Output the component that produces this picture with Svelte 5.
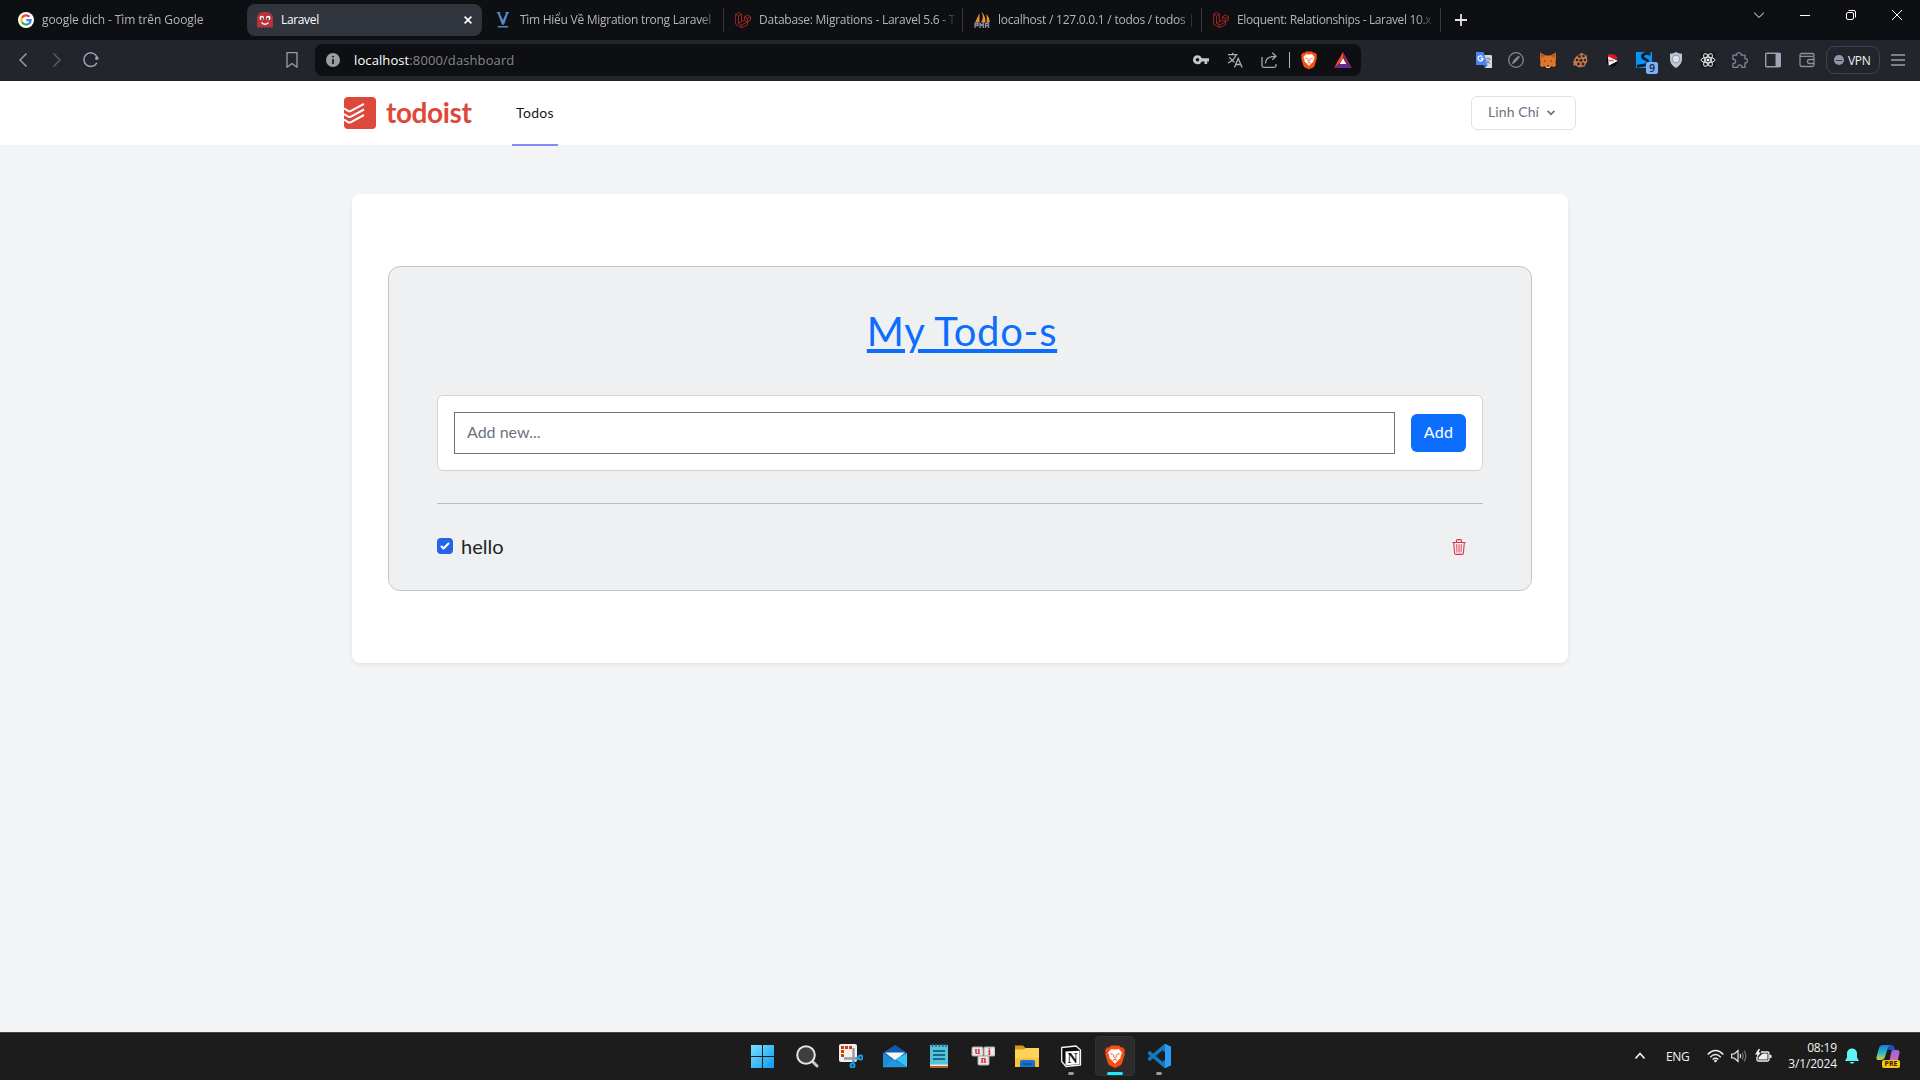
<script>
  const tabs = [
    { icon: 'google', title: 'google dich - Tìm trên Google', ls: '-0.08px' },
    { icon: 'ghost', title: 'Laravel', active: true, ls: '-0.35px' },
    { icon: 'viblo', title: 'Tìm Hiểu Về Migration trong Laravel', sep: true, ls: '-0.27px' },
    { icon: 'laravel', title: 'Database: Migrations - Laravel 5.6 - T', sep: true, ls: '-0.25px' },
    { icon: 'pma', title: 'localhost / 127.0.0.1 / todos / todos |', sep: true, ls: '-0.24px' },
    { icon: 'laravel', title: 'Eloquent: Relationships - Laravel 10.x', sep: true, ls: '-0.36px' }
  ];
  const extensions = ['gtranslate', 'nocompass', 'fox', 'cookie', 'play', 'surf', 'shield', 'react', 'puzzle'];
  const apps = [
    { name: 'windows' }, { name: 'search' }, { name: 'snip' }, { name: 'mail' }, { name: 'notepad' },
    { name: 'unikey' }, { name: 'folder' }, { name: 'notion', open: true },
    { name: 'brave', open: true, focus: true }, { name: 'vscode', open: true }
  ];
  let todos = $state([{ title: 'hello', done: true }]);
</script>

{#snippet braveMark(size)}
  <svg width={size} height={size * 1.15} viewBox="0 0 20 23">
    <path fill="#fb4d12" d="M6 .5h8l2 2.1 1.8-.3L20 5.2l-.7 2 .5 1.8-2.6 8.8c-.4 1.3-1 2-2 2.7L10 23l-5.200-2.500c-1-.7-1.600-1.400-2-2.700L.2 9l.5-1.800L0 5.200l2.200-2.900 1.800.3z" />
    <path fill="#fff" d="M6.200 4 10 4.500l3.800-.5L17 7.500l-1.200 3.300-.3 2.200-2.500 2.600-3 3.200-3-3.200L4.500 13l-.3-2.200L3 7.500z" />
    <path fill="none" stroke="#fb4d12" stroke-width=".9" d="M5.300 8.600 8 9.300M14.700 8.600 12 9.300M8.700 9.500v2.800L10 13l1.300-.7V9.500M8 15.300l2-1 2 1" />
  </svg>
{/snippet}

{#snippet favicon(name)}
  {#if name === 'google'}
    <svg width="16" height="16" viewBox="0 0 16 16"><circle cx="8" cy="8" r="8" fill="#fff" />
      <g fill="none" stroke-width="2.200">
        <path stroke="#ea4335" d="M4 5.700A4.700 4.700 0 0 1 11.400 4.700" />
        <path stroke="#fbbc05" d="M4 5.600a4.700 4.700 0 0 0 0 4.800" />
        <path stroke="#34a853" d="M4 10.300a4.700 4.700 0 0 0 7 1.200" />
        <path stroke="#4285f4" d="M8.200 8.100h4.500A4.700 4.700 0 0 1 10.900 11.600" />
      </g></svg>
  {:else if name === 'ghost'}
    <svg width="16" height="16" viewBox="0 0 16 16"><path fill="#b5333a" d="M0 6a6 6 0 0 1 6-6h4a6 6 0 0 1 6 6v9l-1.500 1-1.700-1-1.600 1-1.600-1L8 16l-1.600-1-1.600 1-1.600-1-1.700 1L0 15z" />
      <circle cx="4.800" cy="6" r="2.300" fill="#fff" /><circle cx="11.200" cy="6" r="2.300" fill="#fff" /><circle cx="5.200" cy="6.800" r="1.200" fill="#8e2730" /><circle cx="10.800" cy="6.800" r="1.200" fill="#8e2730" />
      <path fill="none" stroke="#fff" stroke-width="1.200" d="M4.500 10.500q3.500 3.500 7 0" /></svg>
  {:else if name === 'viblo'}
    <svg width="16" height="16" viewBox="0 0 16 16"><path fill="#5488c7" d="M.8 0h3.400v1.300h-.5L7 8l3-6.700h-.5V0H13v1.300h-.8L8 12.700H6L1.700 1.300H.8zM1.700 13.900h10.500v1.600H1.700z" /></svg>
  {:else if name === 'laravel'}
    <svg width="16" height="16" viewBox="0 0 16 16" fill="none" stroke="#9c2422" stroke-width="1"><path d="M.6 2.200 3.500.6l3 1.600v7.600l3-1.700V4.800l3-1.800 3 1.800v3.300l-3 1.700v3.200l-6 2.500-5.900-3.200zM.6 2.200l2.900 1.700 3-1.700M3.500 3.900v7.500l3 1.700 6-3.300M9.500 4.800l3 1.700 3-1.700M12.500 6.500v3.300M9.500 8.100l3 1.700M6.500 9.800l-3 1.600M6.500 13.100v2.400" /></svg>
  {:else if name === 'pma'}
    <svg width="16" height="16" viewBox="0 0 16 16"><path fill="#e8922a" d="M5.500 1 1 10.500h4.500zM7.500 0C9 3 9.500 7 7 10.500h4.300C12 7 10.500 2.500 7.500 0zM12 2c1 3 1.300 6 .3 8.500h3.400C16 7.500 14.500 4 12 2z" /><path fill="none" stroke="#8d8cae" stroke-width="1.300" d="M1 16v-4.500h3v2H1.500M6 16v-4.500l1.700 2 1.600-2V16M11.500 16v-4.500h3V16M11.500 13.700h3" /></svg>
  {/if}
{/snippet}

{#snippet extension(name)}
  {#if name === 'gtranslate'}
    <svg width="16" height="16" viewBox="0 0 16 16"><path fill="#d5dadf" d="M6 3h9.300l.7.700V16H9z" /><path stroke="#6f8c99" fill="none" d="M9.500 6.700h5M12 5.500v1.200M10.200 11.500c2-1 3.200-2.600 3.500-4.600M10.700 8c.5 1.500 1.700 2.800 3.400 3.700" /><path fill="#4a86f3" d="M0 0h7.500L11.500 13H0z" /><path fill="#2f61c4" d="m7.500 13h4L9 16z" /><path fill="none" stroke="#fff" stroke-width="1.300" d="M6.400 4.700A2.500 2.500 0 1 0 7 6.500H4.700" /></svg>
  {:else if name === 'nocompass'}
    <svg width="16" height="16" viewBox="0 0 16 16" fill="none" stroke="#85878d"><circle cx="8" cy="8" r="7.300" stroke-width="1.300" /><path d="m4.500 11.500 1.200-3L10.500 4l1 1L7 10.300z" fill="#85878d" /></svg>
  {:else if name === 'fox'}
    <svg width="16" height="16" viewBox="0 0 16 16"><path fill="#e27625" d="m0 .5 6 3h4l6-3V6l-.5 5 .5 2-1.500 2-3.500-.8L9.500 16h-3L5 14.200 1.500 15 0 13l.5-2L0 6z" /><path fill="#a35a2a" d="m0 .5 5.200 3.300L1.500 6zM16 .5l-5.200 3.300L14.500 6z" /><path fill="#292b30" d="m4 8.200 2 .7-1.500.8zM12 8.200l-2 .7 1.500.8zM7 13.300h2v1.200H7z" /><path fill="#e9d8c9" d="m6 14.500 2 .5 2-.5-.7 1.500H6.700z" /></svg>
  {:else if name === 'cookie'}
    <svg width="16" height="16" viewBox="0 0 16 16"><path fill="#bf7950" d="m9.500.7 5.100 2.800L15.500 9l-3 5.600-5.500.9-3.700-2.200-2.300.5 1-2.300-1.500-1 1.700-1.500L2 7.500l2-2.800z" /><g fill="#3a211b"><circle cx="7.500" cy="4.500" r="1.400" /><circle cx="11.500" cy="4" r="1.300" /><circle cx="5" cy="8" r="1.300" /><circle cx="9" cy="8.300" r="1.500" /><circle cx="13" cy="8" r="1.200" /><circle cx="6.500" cy="12" r="1.400" /><circle cx="11" cy="12" r="1.400" /></g></svg>
  {:else if name === 'play'}
    <svg width="16" height="16" viewBox="0 0 16 16"><circle cx="8" cy="9" r="5.800" fill="#0b0c10" /><path fill="#e4151f" d="M4 2.200h4.500A5 5 0 0 1 13.500 7.500L4 5.500z" /><path fill="#f4f4f5" d="m4 4.500 10 4.200-9.300 5z" /><path fill="#d0606a" d="M5 7.800h4.500v1.500H5z" /></svg>
  {:else if name === 'surf'}
    <span class="badged"><svg width="16" height="16" viewBox="0 0 16 16"><path fill="#0a94f5" d="M0 0h16v16H0z" /><path fill="none" stroke="#122034" stroke-width="3" d="M14.500 2C9.500.5 6.500 2.200 6.500 4.500 6.500 7.500 12 7 12 10c0 3.800-6 3-11 4.500" /></svg><b class="badge">9</b></span>
  {:else if name === 'shield'}
    <svg width="16" height="16" viewBox="0 0 16 16"><path fill="#bfc6d4" d="M8 0q2.500 1.700 6 1.800V7c0 4-2.500 7-6 9-3.500-2-6-5-6-9V1.800Q5.500 1.700 8 0" /><circle cx="8" cy="7" r="3.700" fill="#dce0e8" stroke="#8f9bb1" stroke-width="1.100" /></svg>
  {:else if name === 'react'}
    <svg width="16" height="16" viewBox="0 0 16 16" fill="none" stroke="#e8e8e8"><path fill="#1b1c20" stroke="none" d="M0 0h16v16H0z" /><ellipse cx="8" cy="8" rx="7" ry="2.700" /><ellipse cx="8" cy="8" rx="7" ry="2.700" transform="rotate(60 8 8)" /><ellipse cx="8" cy="8" rx="7" ry="2.700" transform="rotate(120 8 8)" /><circle cx="8" cy="8" r="1.300" fill="#fff" stroke="none" /></svg>
  {:else}
    <svg width="16" height="16" viewBox="0 0 16 16" fill="none" stroke="#82869a" stroke-width="1.300"><path d="M1 3.200h3.800C4.300 1.800 5.500.7 7 .7s2.700 1.100 2.200 2.500H13v3.600c1.400-.5 2.400.6 2.400 2s-1 2.400-2.400 2v4.500H9.800c.3-1.400-.8-2.400-2-2.400s-2.300 1-2 2.400H1v-4c1.600.4 2.700-.7 2.700-2S2.600 7 1 7.400z" stroke-linejoin="round" /></svg>
  {/if}
{/snippet}

{#snippet app(name)}
  {#if name === 'windows'}
    <svg width="24" height="24" viewBox="0 0 24 24"><defs><linearGradient id="win" gradientUnits="userSpaceOnUse" x1="0" y1="0" x2="24" y2="24"><stop offset="0" stop-color="#7fe0ff" /><stop offset="1" stop-color="#0a98f4" /></linearGradient></defs><path fill="url(#win)" d="M0 1h11v11H0zM12 1h11v11H12zM0 13h11v11H0zM12 13h11v11H12z" /></svg>
  {:else if name === 'search'}
    <svg width="24" height="24" viewBox="0 0 24 24" fill="none"><path stroke="#c9c9c9" stroke-width="3" stroke-linecap="round" d="m17 17 5 5" /><circle cx="11" cy="11" r="8.800" fill="#3c3f42" stroke="#e3e3e3" stroke-width="2" /></svg>
  {:else if name === 'snip'}
    <svg width="24" height="24" viewBox="0 0 24 24" fill="none"><rect x="0" y="0" width="18" height="18" rx="2" fill="#f0f0f0" /><path stroke="#d83b01" stroke-width="3" stroke-dasharray="3 1" d="M3.500 13V2M6 3.500h7" /><path stroke="#9a9fa5" stroke-width="2.500" d="M14.500 4v14M5 14.500h14" /><g stroke="#1b9de2" stroke-width="2"><circle cx="21.500" cy="13.500" r="2" /><circle cx="13.500" cy="21.500" r="2" /><path d="M16.500 14.500l3-.5M14.500 16.500l-.5 3" /></g></svg>
  {:else if name === 'mail'}
    <svg width="24" height="24" viewBox="0 0 24 24"><path fill="#0f5cae" d="M0 9 12 1l12 8v4H0z" /><path fill="#f5f7f9" d="M2 8.500h20l-10 8z" /><path fill="#1b8edb" d="M0 9l12 7.500L24 23H0z" /><path fill="#35c3f3" d="M24 9v14.200L12 15.500z" /><path fill="#1f9ae2" d="M0 23.200 11 15.500 24 23.200z" /></svg>
  {:else if name === 'notepad'}
    <svg width="24" height="24" viewBox="0 0 24 24"><path fill="#b5601d" d="M3 20h18v4H3z" /><path fill="#e7e9ea" d="M3 20h18v2H3z" /><path fill="#56c3da" d="M3 1h18v19.500H3z" /><path stroke="#176b85" stroke-width="2" fill="none" d="M6 7h12M6 11h12M6 15h12" /><path stroke="#176b85" stroke-width="1.500" d="M5.500 0v3M9 0v3M12.500 0v3M16 0v3M19 0v3" /></svg>
  {:else if name === 'unikey'}
    <svg width="24" height="24" viewBox="0 0 24 24"><g fill="#e8e8e8" stroke="#aaa"><rect x="1" y="3" width="11" height="9" rx="1" /><rect x="13" y="3" width="11" height="9" rx="1" /><rect x="7" y="12" width="11" height="9" rx="1" /></g><g fill="#e0242c" font-family="Liberation Serif, serif" font-weight="bold" font-size="10" text-anchor="middle"><text x="6.500" y="10">u</text><text x="18.500" y="10.500">i</text><text x="12.500" y="19">n</text></g></svg>
  {:else if name === 'folder'}
    <svg width="24" height="24" viewBox="0 0 24 24"><path fill="#d99a1c" d="M0 1.500h8l2.500 2.500H22v6H0z" /><path fill="#fdd35a" d="M0 5.500h8.500L11 4h13v19H0z" /><path fill="#f9c23c" d="M0 14h24v9H0z" /><path fill="#1672cc" d="M5 23v-5q0-2 2-2h11q2 0 2 2v5z" /><path stroke="#0c4f99" stroke-width="1.500" d="M8 20h8.500" /></svg>
  {:else if name === 'notion'}
    <svg width="24" height="24" viewBox="0 0 24 24"><path fill="#0a0a0a" stroke="#f2f2f2" stroke-width="1.300" d="M2.700 3.500 17 2l4.500 4v15L7 22.500l-4.300-5z" stroke-linejoin="round" /><path fill="#fff" d="M6.500 7.500 20.500 6.700v13.500L6.500 21.300z" /><text x="13.500" y="18.800" text-anchor="middle" font-family="Liberation Serif, serif" font-weight="bold" font-size="14" fill="#111">N</text></svg>
  {:else if name === 'brave'}
    {@render braveMark(20)}
  {:else}
    <svg width="24" height="24" viewBox="0 0 24 24" fill="none"><path stroke="#1678bd" stroke-width="3.500" d="M1.500 15.800 18 1.800v6M1.500 8.200 18 22.200v-6" /><path fill="#2b9df0" d="M18 0 24 2.500v19L18 24z" /></svg>
  {/if}
{/snippet}

<div class="screen">
  <div class="tabstrip">
    {#each tabs as tab}
      <div class="slot" class:sep={tab.sep}>
        <div class="tab" class:active={tab.active}>
          <span class="fav">{@render favicon(tab.icon)}</span>
          <span class="title" style:letter-spacing={tab.ls}>{tab.title}</span>
          {#if tab.active}
            <svg class="x" width="8" height="8" viewBox="0 0 8 8" stroke="#fff" stroke-width="1.700"><path d="m.6.600 6.800 6.800M7.400.600.6 7.400" /></svg>
          {/if}
        </div>
      </div>
    {/each}
    <svg class="plus" width="12" height="12" viewBox="0 0 12 12" stroke="#e4e4e6" stroke-width="1.800"><path d="M6 0v12M0 6h12" /></svg>
    <div class="winctl">
      <svg width="10" height="10" viewBox="0 0 10 10"><path d="m0 2.500 5 5 5-5" /></svg>
      <svg width="10" height="10" viewBox="0 0 10 10"><path d="M0 5.500h10" /></svg>
      <svg width="10" height="10" viewBox="0 0 10 10"><rect x=".5" y="2.500" width="7" height="7" rx="1.500" /><path d="M2.500.5H8q1.500 0 1.500 1.500v5.500" /></svg>
      <svg width="10" height="10" viewBox="0 0 10 10"><path d="m0 0 10 10M10 0 0 10" /></svg>
    </div>
  </div>

  <div class="toolbar">
    <div class="navbtns">
      <svg width="8" height="14" viewBox="0 0 8 14" stroke="#9a9da8"><path d="M7.500.5 1 7l6.500 6.500" /></svg>
      <svg width="8" height="14" viewBox="0 0 8 14" stroke="#5a5d66"><path d="M.5.5 7 7 .5 13.500" /></svg>
      <svg class="reload" width="16" height="16" viewBox="0 0 16 16" stroke="#9da1b2"><path d="M13.800 10.800A6.800 6.800 0 1 1 14 5" /><circle cx="13.800" cy="6.200" r="1.700" fill="#9da1b2" stroke="none" /></svg>
    </div>
    <svg class="bookmark" width="12" height="16" viewBox="0 0 12 16" stroke="#9a9da8"><path d="M1 .7h10v14.500l-5-3.700-5 3.700z" stroke-linejoin="round" /></svg>
    <div class="address">
      <svg width="14" height="14" viewBox="0 0 14 14"><circle cx="7" cy="7" r="7" fill="#9b9ca0" /><path fill="#0e0f13" d="M6.200 3h1.600v1.600H6.200zM6.200 6h1.600v5H6.200z" /></svg>
      <span class="url"><b>localhost</b>:8000/dashboard</span>
      <div class="addricons">
        <svg width="16" height="16" viewBox="0 0 16 16"><path fill="#c6c7ca" fill-rule="evenodd" d="M4.500 3.200a4.500 4.500 0 1 0 4.200 6.200h2.800v2.600h2.700V9.400H16V6.200H8.700a4.500 4.500 0 0 0-4.200-3zM4.500 6a1.700 1.700 0 1 1 0 3.500 1.700 1.700 0 0 1 0-3.500z" /></svg>
        <svg width="16" height="16" viewBox="0 0 16 16" fill="none" stroke="#aeb0b6" stroke-width="1.300"><path d="M1 2.700h9.500M5.700.7v2M9 2.700C8.300 6 5.500 8.800 1 11M2.500 5c1 2 3 4.300 5 5.200M7.500 15.500 11.200 6.500l3.900 9M8.800 12.500h5" /></svg>
        <svg width="16" height="16" viewBox="0 0 16 16" fill="none" stroke="#a4a6ac" stroke-width="1.300"><path d="M1 5v8.500q0 1.800 1.800 1.800h10.400q1.800 0 1.800-1.800V12M4.500 11.500C4.500 7 7 4.300 14.500 4.300M11.300.8l3.700 3.500-3.700 3.500" /></svg>
        <i class="rule"></i>
        {@render braveMark(16)}
        <svg class="bat" width="18" height="16" viewBox="0 0 18 16"><path fill="#ff4724" d="M9 0v5.500L6 11 0 16z" /><path fill="#9e1f63" d="M9 0l9 16-6-5-3-5.500z" /><path fill="#662d91" d="m0 16 6-5h6l6 5z" /><path fill="#fff" d="m9 6 3.300 6H5.700z" /></svg>
      </div>
    </div>
    <div class="exts">
      {#each extensions as name}{@render extension(name)}{/each}
      <svg class="panel" width="16" height="16" viewBox="0 0 16 16"><rect x=".7" y="1.200" width="14.600" height="13.600" rx="1" fill="none" stroke="#9a9eae" stroke-width="1.400" /><path fill="#a2a6b5" d="M10.500 1h5v14h-5z" /></svg>
      <svg class="wallet" width="16" height="16" viewBox="0 0 16 16" fill="none" stroke="#8b8e9b" stroke-width="1.300"><path d="M15 4V3q0-1.500-1.500-1.500h-11Q1 1.500 1 3v9.500Q1 14.500 3 14.500h10.500q1.500 0 1.500-1.500V6q0-1.700-1.500-1.700H2.500Q1 4.300 1 3M15 7.500h-4.500a2 2 0 0 0 0 4H15" /></svg>
    </div>
    <div class="vpn"><i></i>VPN</div>
    <svg class="menu" width="14" height="12" viewBox="0 0 14 12" stroke="#9a9da8" stroke-width="1.300"><path d="M0 1h14M0 6h14M0 11h14" /></svg>
  </div>

  <div class="page">
    <nav>
      <svg class="mark" width="32" height="32" viewBox="0 0 32 32"><rect width="32" height="32" rx="4" fill="#de483a" /><g fill="none" stroke="#fff" stroke-width="2"><path d="m0 11.300 4 2.500q1.500.9 3 0L20 6.800" /><path d="m0 17 4 2.500q1.500.9 3 0L20 12.500" /><path d="m0 22.600 4 2.500q1.500.9 3 0L20 18" /></g></svg>
      <span class="brand">todoist</span>
      <a class="navlink" href="#todos">Todos</a>
      <button class="user"><span>Linh Chí</span>
        <svg width="8" height="6" viewBox="0 0 8 6" fill="none" stroke="#6b7280" stroke-width="1.700"><path d="m.6.800 3.400 3.500L7.400.800" /></svg>
      </button>
    </nav>
    <main>
      <section class="board">
        <h1>My Todo-s</h1>
        <form class="add" onsubmit={(e) => e.preventDefault()}>
          <input type="text" placeholder="Add new..." />
          <button>Add</button>
        </form>
        <hr />
        {#each todos as todo}
          <div class="todo">
            <span class="check"><svg width="16" height="16" viewBox="0 0 16 16" fill="#fff"><path d="M12.207 4.793a1 1 0 0 1 0 1.414l-5 5a1 1 0 0 1-1.414 0l-2-2a1 1 0 0 1 1.414-1.414L6.500 9.086l4.293-4.293a1 1 0 0 1 1.414 0z" /></svg></span>
            <span class="name">{todo.title}</span>
            <svg class="trash" width="16" height="16" viewBox="0 0 16 16" fill="none" stroke="#dc3545" stroke-width="1.100"><path d="M1.500 3.500h13M5.500 3.300V1.800Q5.500.6 6.700.6h2.600q1.200 0 1.200 1.200v1.500M2.700 3.500l.9 10.700q.1 1.200 1.300 1.200h6.200q1.200 0 1.300-1.200l.9-10.700" /><path stroke-width=".9" d="m5.700 5.200.3 8.300M8 5.200v8.300M10.300 5.200l-.3 8.300" /></svg>
          </div>
        {/each}
      </section>
    </main>
  </div>

  <footer class="taskbar">
    <div class="apps">
      {#each apps as a}
        <div class="app" class:focus={a.focus}>
          {@render app(a.name)}
          {#if a.open}<i class="dot"></i>{/if}
        </div>
      {/each}
    </div>
    <div class="tray">
      <svg width="10" height="8" viewBox="0 0 10 8" fill="none" stroke="#eee" stroke-width="1.700"><path d="m.5 6.500 4.500-5 4.500 5" /></svg>
      <span class="lang">ENG</span>
      <svg class="wifi" width="17" height="14" viewBox="0 0 17 14" fill="none" stroke="#eee" stroke-width="1.400"><path d="M.7 5.500q7.800-8 15.600 0M3.200 8.200q5.300-5.200 10.600 0M5.700 10.500q2.800-2.500 5.600 0" /><circle cx="8.500" cy="12" r="1.300" fill="#eee" stroke="none" /></svg>
      <svg class="vol" width="16" height="14" viewBox="0 0 16 14" fill="none" stroke="#eee" stroke-width="1.200"><path d="M.7 5h2.500L7 1.500v11L3.200 9H.7z" /><path d="M9 5q1.300 2 0 4" /><path stroke="#777" d="M11 3.500q2.300 3.500 0 7M13 1.500q3.700 5.500 0 11" /></svg>
      <svg class="batt" width="17" height="14" viewBox="0 0 17 14"><path fill="none" stroke="#eee" stroke-width="1.300" d="M6 3h6.500q1.500 0 1.500 1.500v6q0 1.500-1.500 1.500h-9Q2 12 2 10.500V8" /><path fill="#eee" d="M3.500 10.500V8.500L7.500 4.500h5v6zM14.500 6h2v3h-2zM3.500 0 0 5.500h2.300L1.500 9 6 3.500H3.700L5 0z" /></svg>
      <div class="clock"><span>08:19</span><span>3/1/2024</span></div>
      <svg class="bell" width="14" height="16" viewBox="0 0 14 16" fill="#5ef3f7"><path d="M7 .5c3 0 5 2.200 5 5v4l1.700 2.700v.8H.3v-.8L2 9.500v-4c0-2.800 2-5 5-5zM4.700 14h4.600q-.6 1.700-2.300 1.700T4.700 14z" /></svg>
      <div class="copilot">
        <svg width="24" height="24" viewBox="0 0 24 24"><defs><linearGradient id="cpa" x1="0" y1="0" x2="0" y2="1"><stop offset="0" stop-color="#1b7de0" /><stop offset=".5" stop-color="#27b8c6" /><stop offset="1" stop-color="#d9c93b" /></linearGradient><linearGradient id="cpb" x1="0" y1="0" x2="0" y2="1"><stop offset="0" stop-color="#9b62e6" /><stop offset="1" stop-color="#f46a8d" /></linearGradient></defs><path fill="#1654c0" d="M8 1h7q3 0 4 5h-5L9 4z" /><path fill="url(#cpa)" d="M7 1h7.500q-2 0-3 4L9 13q-1 3-4 3H2Q0 16 .5 13L3 4q1-3 4-3z" /><path fill="url(#cpb)" d="M17 6h4q3 0 2.500 3L21 19q-1 3-4 3H9q3 0 4-3l2-10q.5-3 2-3z" /></svg>
        <b>PRE</b>
      </div>
    </div>
  </footer>
</div>

<style>
  :global(body) { margin: 0; background: #f3f4f6; }
  .screen { width: 1920px; height: 1080px; display: flex; flex-direction: column; overflow: hidden; font-family: 'Open Sans', 'Noto Sans', sans-serif; }
  .screen * { box-sizing: border-box; }
  svg { flex: none; display: block; }

  .tabstrip { height: 40px; background: #0e0f13; display: flex; align-items: center; padding-left: 7px; }
  .slot { width: 239px; height: 24px; flex: none; display: flex; align-items: center; border-right: 1px solid transparent; }
  .slot.sep { border-right-color: #38393b; }
  .tab { height: 32px; width: 235px; margin-left: 1px; padding-left: 10px; display: flex; align-items: center; color: #b4b5b8; font-size: 12px; border-radius: 8px; }
  .tab.active { background: #30343c; color: #fff; }
  .fav { width: 24px; flex: none; }
  .title { width: 196px; flex: none; white-space: nowrap; line-height: 18px; mask-image: linear-gradient(90deg, #000 180px, transparent 198px); }
  .active .title { width: 183px; mask-image: none; }
  .plus { margin-left: 14px; }
  .winctl { margin: 0 18px 11px auto; display: flex; gap: 36px; fill: none; stroke: #fff; stroke-width: 1; }

  .toolbar { height: 41px; background: #22252c; border-bottom: 1px solid #1d1e29; display: flex; align-items: center; fill: none; }
  .navbtns { display: flex; align-items: center; gap: 26px; margin-left: 19px; width: 267px; stroke-width: 1.500; }
  .reload { margin-left: -4px; }
  .bookmark { stroke-width: 1.300; margin-right: 17px; }
  .address { width: 1046px; height: 32px; border-radius: 8px; background: #0e0f13; display: flex; align-items: center; padding: 0 9px 0 11px; }
  .url { color: #85868a; font-size: 13px; margin-left: 14px; letter-spacing: .1px; }
  .url b { color: #fff; font-weight: 400; }
  .addricons { display: flex; align-items: center; margin-left: auto; gap: 18px; }
  .rule { width: 1px; height: 16px; background: #b5b6b9; margin: 0 -7px 0 -6px; }
  .bat { margin-left: -1px; }
  .exts { display: flex; gap: 16px; align-items: center; margin-left: 115px; }
  .panel { margin-left: 1px; }
  .wallet { margin-left: 2px; }
  .badged { position: relative; width: 16px; height: 16px; }
  .badge { position: absolute; left: 10px; top: 10px; width: 12px; height: 12px; border-radius: 2px; background: #80adf8; color: #17213a; font-size: 10px; line-height: 12px; text-align: center; font-weight: 600; }
  .vpn { width: 54px; height: 28px; margin-left: 11px; border: 1px solid #41444d; border-radius: 9px; color: #f1f1f4; font-size: 12px; display: flex; align-items: center; gap: 4px; padding-left: 7px; letter-spacing: -.3px; }
  .vpn i { width: 10px; height: 10px; border-radius: 50%; background: #9294a8; display: flex; align-items: center; justify-content: center; }
  .vpn i::after { content: ''; width: 6px; height: 1px; background: #33364a; }
  .menu { margin-left: 11px; }

  .page { flex: 1; min-height: 0; background: #f3f4f6; font-family: Lato, sans-serif; color: #212529; }
  nav { height: 65px; background: #fff; border-bottom: 1px solid #f3f4f6; padding: 0 344px; display: flex; align-items: center; }
  .brand { color: #de483a; font-weight: 700; font-size: 28px; width: 126px; margin: -2px 0 0 10px; line-height: 32px; letter-spacing: -.4px; }
  .navlink { width: 46px; height: 65px; align-self: flex-start; border-bottom: 2px solid #818cf8; color: #111827; font-size: 14px; line-height: 63px; text-align: center; text-decoration: none; letter-spacing: .3px; }
  .user { margin-left: auto; margin-top: -1px; width: 105px; height: 34px; background: #fff; border: 1px solid #dee2e6; border-radius: 6px; color: #6b7280; font: 14px Lato, sans-serif; letter-spacing: .1px; padding: 0 0 0 16px; display: flex; align-items: center; gap: 8px; }
  .user span { padding-bottom: 2px; }
  main { width: 1216px; height: 469px; margin: 48px auto 0; padding: 72px 36px; background: #fff; border-radius: 8px; box-shadow: 0 2px 4px rgba(0,0,0,.07); }
  .board { height: 325px; background: #eff0f2; border: 1px solid #c2c4c6; border-radius: 12px; padding: 32px 48px 0; }
  h1 { margin: 8px 0 0; padding-left: 4px; text-align: center; color: #0d6efd; font-size: 40px; font-weight: 400; line-height: 48px; letter-spacing: .7px; text-decoration: underline; text-decoration-thickness: 4px; text-underline-offset: 3px; }
  .add { height: 76px; margin: 40px 0 0; border: 1px solid #d2d3d4; border-radius: 6px; background: #fff; display: flex; align-items: center; padding: 0 16px; gap: 16px; }
  .add input { flex: 1; height: 42px; border: 1px solid #6b7280; padding: 0 12px 3px; font: 16px Lato, sans-serif; background: #fff; outline: none; }
  .add input::placeholder { color: #6b7280; opacity: 1; }
  .add button { width: 55px; height: 38px; border: 0; border-radius: 6px; background: #0d6efd; color: #fff; font: 16px Lato, sans-serif; letter-spacing: .3px; padding: 0 0 3px; }
  hr { border: 0; height: 1px; background: #bbbdbf; margin: 32px 0 31px; }
  .todo { display: flex; align-items: center; height: 24px; padding-right: 16px; }
  .check { width: 16px; height: 16px; border-radius: 4px; background: #2563eb; margin-right: 8px; margin-top: -2px; }
  .name { flex: 1; font-size: 20px; line-height: 24px; margin-top: -2px; }

  .taskbar { height: 48px; background: #1c1c1c; border-top: 1px solid #444546; display: grid; grid-template-columns: 1fr 436px 1fr; align-items: start; }
  .apps { grid-column: 2; display: flex; gap: 4px; margin: 3px 0 0 1px; }
  .app { position: relative; flex: none; width: 40px; height: 40px; border-radius: 4px; border: 1px solid transparent; display: flex; align-items: center; justify-content: center; }
  .app.focus { background: #2b2b2b; border-color: #333; }
  .dot { position: absolute; bottom: 0; left: 16px; width: 6px; height: 3px; border-radius: 2px; background: #9a9a9a; }
  .focus .dot { left: 11px; width: 16px; background: #21e9fb; }
  .tray { grid-column: 3; height: 45px; display: flex; align-items: center; justify-content: flex-end; padding-right: 20px; color: #f2f2f2; font-size: 12px; }
  .lang { margin: 1px 18px 0 21px; width: 23px; letter-spacing: -.3px; }
  .vol { margin-left: 7px; }
  .batt { margin-left: 8px; }
  .clock { width: 65px; display: flex; flex-direction: column; align-items: flex-end; line-height: 16px; letter-spacing: -.15px; }
  .bell { margin: 0 17px 0 8px; }
  .copilot { position: relative; width: 24px; height: 24px; }
  .copilot b { position: absolute; left: 6px; top: 16px; width: 18px; height: 8px; background: #fbc412; color: #2a2205; border-radius: 2px; font-size: 7px; line-height: 8px; text-align: center; }
</style>
